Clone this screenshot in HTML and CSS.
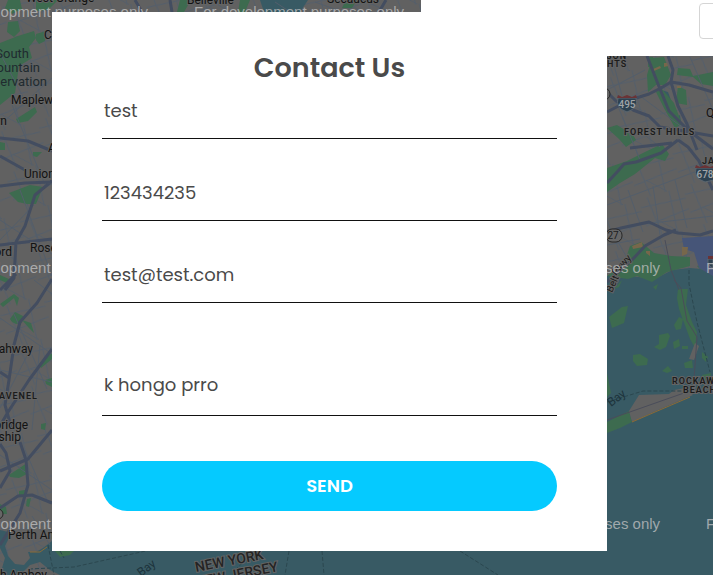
FILE: index.html
```html
<!DOCTYPE html>
<html lang="en">
<head>
<meta charset="utf-8">
<meta name="viewport" content="width=device-width, initial-scale=1">
<title>Contact Us</title>
<link rel="stylesheet" href="styles.css">
</head>
<body>
<main class="page">
  <svg class="map" viewBox="0 0 713 575" preserveAspectRatio="xMidYMid slice" aria-hidden="true">
    <defs>
      <pattern id="streets" width="46" height="42" patternUnits="userSpaceOnUse" patternTransform="rotate(-17)">
        <path class="street" d="M0 8L46 12M0 27L46 23M9 0L13 42M32 0L28 42M13 25L30 42"/>
      </pattern>
    </defs>
    <rect class="land" width="713" height="575"/>
    <rect width="713" height="575" fill="url(#streets)"/>

    <!-- water -->
    <g class="water">
      <path d="M607 276L630 276L655 279L672 270L690 268L713 270V575H607Z"/>
      <path d="M0 530L8 532L9 538L5 546L8 556L15 564L24 565L30 558L28 552L36 552L43 548L52 541V551H713V575H60L50 570L40 562L30 565L20 575H0L5 558L0 548Z"/>
      <path d="M260 0H308L300 12H264Z"/>
      <path d="M15 37L20 36L18 45L13 49L12 45ZM661 90L668 92L672 103L667 110L662 101ZM673 120L680 115L681 123L676 127Z"/>
    </g>

    <!-- parks -->
    <g class="park">
      <path d="M8 0H20L22 9L12 14L5 8ZM8 22L18 21L20 31L14 37L7 32ZM0 43L18 36L34 31L36 38L29 47L32 58L19 66L15 93L0 105ZM36 34L46 31L45 41L39 44L36 40Z"/>
      <path d="M16 119L35 107L37 112L28 121L18 123ZM33 152L42 152L37 157L33 156ZM9 193L30 185L43 187L36 204H27L18 202ZM0 142L5 143L5 150H0ZM0 275L9 279L7 283L0 280Z"/>
      <path d="M0 304L14 294L19 298L17 306L14 298L3 307ZM10 319L15 312L23 316L22 323L16 324L12 322ZM22 320L31 323L34 333L29 328ZM39 364L52 353V359L41 368ZM45 380L52 378V387L46 384ZM41 424L46 423L45 430L41 429Z"/>
      <path d="M9 475L27 463V474L19 478L10 477ZM19 491L25 490L24 496H19ZM27 499L31 498L29 507L26 506ZM0 504L6 507L7 514L0 514Z"/>
      <path d="M36 0H58L48 10L36 11ZM180 0H191L184 12H177ZM240 0H250L245 12H238ZM346 0H357L352 8H342ZM55 551H74L70 555L60 557Z"/>
      <path d="M647 75L652 58L664 57L671 75L665 85L656 85L648 92ZM678 68L690 69L693 76L713 72V86L701 84L693 77L677 75ZM678 86L686 90L687 105L676 103ZM656 92L662 89L674 103L682 124L675 128L664 108ZM607 128L617 125L633 135L636 140L626 147L619 139ZM607 168L627 161L647 151L662 144L669 154L665 161L655 158L635 174L620 183L607 192ZM648 57H653L654 67H648Z"/>
      <path d="M630 246L641 242L654 253L671 256L690 257V266L667 272L652 282L637 276L628 279L607 276L624 264ZM697 266L705 264L709 269L701 270Z"/>
      <path d="M609 317L622 307L628 306L624 323L612 328ZM614 289L622 280L619 287ZM607 373L611 393L607 397ZM633 355L640 354L648 359L647 365L637 366L633 361ZM659 335L668 333L670 336L666 347L660 350L654 347L659 344ZM662 371L668 366L672 371L667 373ZM673 342L679 339L680 346L674 349ZM684 363L692 360L693 368L685 368ZM678 289L688 289L686 305L692 322L697 332L695 348L690 339L679 309L677 298ZM674 325L679 317L683 319L681 329L676 330ZM702 352L708 357L706 362L702 358ZM702 375L711 373L710 381L703 379ZM607 422L629 411L632 422L620 428L607 433ZM653 287L658 284L656 290ZM682 346H688V349H682Z"/>
    </g>

    <!-- airport and sand -->
    <path class="airport" d="M682 238L713 236V276L699 268L694 252L684 249Z"/>
    <path class="land" d="M629 411L639 395L669 394L674 390L685 388L693 395L656 411L632 422ZM689 359L695 343L699 346L694 360Z"/>
    <path class="sand-line" d="M632 422L655 412L690 397M30 552L40 552L47 547"/>
    <path class="sand" d="M632 246L642 242L643 247L633 249ZM646 251L650 251L650 256L646 253ZM682 247L688 247L687 254L682 256ZM664 63L667 63L668 66L664 67ZM677 86H681V88H677ZM653 69L660 66L661 68L654 71Z"/>

    <!-- streets near the bay -->
    <g class="street">
      <path d="M607 232L644 224L713 216M607 205L700 170M628 190L643 232M653 186L660 235M617 240L630 263M675 180L687 228M607 90L645 70M690 57L713 110M607 245L640 239M637 129L660 147M612 57L622 96M615 99L640 160M640 96L713 150"/>
      <path d="M0 318L52 354M14 314L47 389M34 280L52 294M0 370L52 382M0 408L30 350M40 345L32 430M25 450L47 500M0 455L52 490M32 516L50 545M10 100L45 185M0 125L52 78M0 53L30 110M0 220L52 254M20 190L52 276M0 240L34 205"/>
      <path d="M210 0L230 12M275 2L290 12M362 0L390 12M315 2L337 10"/>
    </g>

    <!-- main roads -->
    <g class="road">
      <path d="M0 138L28 141L52 151M0 186L25 183L52 182M52 181L35 195L25 226L16 242L14 278L5 290M0 156L25 170M0 290L16 274M52 279L37 303L20 322L14 345L9 380L5 405L12 430M52 349L29 380L8 412L0 426M0 372L9 378M0 471L28 459L52 430M0 508L18 496L32 495L52 503M0 545L20 513L28 485L26 460L20 442M0 245L52 239M0 444L6 453L10 471L0 488"/>
      <path d="M647 56L658 84L669 111L688 130L713 149M668 56L673 70L671 82L661 88L649 94L630 100L607 112M671 82L678 106L687 124L697 150M671 82L689 85L713 92M607 92L616 101L633 110L649 116L660 127L678 130L713 136M678 140L661 153L636 162L624 164L618 171L607 183M678 140L688 147L699 161L713 190M607 232L621 228L649 222L666 230L678 233L700 235L713 231M632 260L645 246L664 235L676 230M632 260L607 282M630 148L672 143M135 0L142 12M170 0L172 12M386 0L379 12"/>
    </g>
    <path class="rail" d="M665 240L671 270L679 290M674 280L681 288L687 321L697 337L694 379M607 420L684 393"/>
    <path class="dashed" d="M689 270V284L697 322L710 372M607 402L643 391L682 391M48 545L54 575M29 569L74 567L150 550M235 570L255 551M289 551L285 575M322 551L324 575M460 551L498 575M60 551L64 558"/>

    <!-- route shields -->
    <rect class="route" x="606" y="229" width="16" height="13" rx="6"/>
    <circle class="route" cx="604" cy="94" r="6"/>
    <circle class="route" cx="-2" cy="514" r="5"/>
    <g>
      <path class="shield" d="M618 98H636Q639 108 627 112Q615 108 618 98Z"/>
      <path class="shield-top" d="M618 95L622 97L627 95L632 97L636 95L637 98H617Z"/>
      <path class="shield" d="M696 168H714V180L705 182Q693 178 696 168Z"/>
      <path class="shield-top" d="M696 165L700 167L705 165L710 167L713 166V168H695Z"/>
      <path class="shield" d="M708 259H713V268Q707 266 708 259Z"/>
      <path class="shield-top" d="M708 256H713V259H708Z"/>
    </g>
    <g class="shield-text">
      <text x="627" y="108">495</text>
      <text x="705" y="178">678</text>
      <text class="route-text" x="613" y="239">27</text>
    </g>

    <!-- place names -->
    <g class="place">
      <text x="26" y="2">West Orange</text>
      <text x="187" y="4">Belleville</text>
      <text x="327" y="3">Secaucus</text>
      <text x="44" y="39">C</text>
      <text x="11" y="104">Maplewood</text>
      <text x="24" y="178">Union</text>
      <text x="30" y="252">Roselle</text>
      <text x="8" y="539">Perth Amboy</text>
      <text x="48" y="152">A</text>
      <text x="706" y="117">Q</text>
      <g class="place-end">
        <text x="7" y="125">rn</text>
        <text x="12" y="256">ord</text>
        <text x="33" y="353">Rahway</text>
        <text x="28" y="429">bridge</text>
        <text x="21" y="441">ship</text>
        <text x="47" y="579">South Amboy</text>
      </g>
    </g>
    <g class="park-name">
      <text x="29" y="58">South</text>
      <text x="40" y="72">Mountain</text>
      <text x="47" y="86">Reservation</text>
    </g>
    <g class="district">
      <text x="-1" y="399">AVENEL</text>
      <text x="624" y="135">FOREST HILLS</text>
      <text x="606" y="59">SON</text>
      <text x="607" y="67">HTS</text>
      <text x="702" y="164">JAMAICA</text>
      <text x="672" y="384">ROCKAWAY</text>
      <text x="683" y="393">BEACH</text>
    </g>
    <g class="state">
      <text transform="translate(196 572) rotate(-11)">NEW YORK</text>
      <text transform="translate(197 587) rotate(-11)">NEW JERSEY</text>
    </g>
    <g class="bay">
      <text transform="translate(611 407) rotate(-37)">Bay</text>
      <text transform="translate(141 577) rotate(-37)">Bay</text>
      <text class="parkway" transform="translate(612 293) rotate(-66)">Belt</text>
      <text class="parkway" transform="translate(616 276) rotate(-48)">Pkwy</text>
    </g>

    <g class="watermark">
      <text x="-62" y="17">For development purposes only</text>
      <text x="194" y="17">For development purposes only</text>
      <text x="-62" y="273">For development purposes only</text>
      <text x="450" y="273">For development purposes only</text>
      <text x="706" y="273">For development purposes only</text>
      <text x="-62" y="529">For development purposes only</text>
      <text x="450" y="529">For development purposes only</text>
      <text x="706" y="529">For development purposes only</text>
    </g>
  </svg>

  <div class="toolbar"><button class="toolbar-button" type="button" aria-label="Menu"></button></div>

  <form class="card">
    <h1 class="title">Contact Us</h1>
    <input class="field" type="text" aria-label="Name" value="test">
    <input class="field" type="tel" aria-label="Phone" value="123434235">
    <input class="field" type="email" aria-label="Email" value="test@test.com">
    <textarea class="field message" aria-label="Message">k hongo prro</textarea>
    <button class="send" type="button">SEND</button>
  </form>
</main>
</body>
</html>
```
FILE: styles.css
```css
* { box-sizing: border-box; }

body {
  margin: 0;
  font-family: Poppins, Inter, sans-serif;
  color: #4a4a4a;
}

.page {
  position: relative;
  min-height: 100vh;
  padding: 12px 106px 24px 52px;
  overflow: hidden;
  background: #616161;
}

/* Map backdrop */
.map {
  position: absolute;
  inset: 0;
  width: 100%;
  height: 100%;
  font-family: Roboto, sans-serif;
}
.land { fill: #616161; }
.water { fill: #385a64; }
.park { fill: #3d6b4f; }
.airport { fill: #465578; }
.sand { fill: #77674b; }
.sand-line { fill: none; stroke: #8a6a36; stroke-width: 1; }
.street { fill: none; stroke: #535e6b; stroke-width: 1; }
.road { fill: none; stroke: #434d60; stroke-width: 3; stroke-linejoin: round; }
.rail { fill: none; stroke: #4a4d5a; stroke-width: 1; }
.dashed { fill: none; stroke: #2b474f; stroke-width: 1; stroke-dasharray: 4 2; }
.route { fill: #666; stroke: #262626; stroke-width: 1; }
.shield { fill: #2d4150; stroke: #5c6770; stroke-width: 1; }
.shield-top { fill: #6a3336; }
.shield-text { fill: #a0a5a8; font-size: 10px; font-weight: 500; text-anchor: middle; }
.route-text { fill: #1d1d1d; font-weight: 400; }
.place, .district, .park-name, .state, .parkway {
  paint-order: stroke;
  stroke: #646464;
  stroke-width: 2px;
}
.place { fill: #121212; font-size: 12px; }
.place-end { text-anchor: end; }
.park-name { fill: #202b30; font-size: 13px; text-anchor: end; stroke: none; }
.district { fill: #1b1b1b; font-size: 9px; font-weight: 600; letter-spacing: 1px; }
.state { fill: #242424; font-size: 14px; font-weight: 500; }
.bay { fill: #1d343c; font-size: 12px; }
.parkway { fill: #1b1b1b; font-size: 10px; }
.watermark {
  fill: #c4c4c4;
  fill-opacity: 0.75;
  font-family: "Liberation Sans", Arial, sans-serif;
  font-size: 15px;
}

/* Bar over the map's corner */
.toolbar {
  position: absolute;
  top: 0;
  right: 0;
  display: flex;
  justify-content: flex-end;
  width: 41%;
  height: 56px;
  padding-top: 3px;
  overflow: hidden;
  background: #fff;
}
.toolbar-button {
  flex: none;
  width: 56px;
  height: 36px;
  margin-right: -42px;
  border: 1px solid #d5d5d5;
  border-radius: 4px;
  background: #fff;
}

/* Contact form */
.card {
  position: relative;
  display: flex;
  flex-direction: column;
  padding: 35px 50px 40px;
  background: #fff;
}
.title {
  margin: 0;
  font-size: 27px;
  line-height: 42px;
  font-weight: 600;
  text-align: center;
}
.field {
  width: 100%;
  height: 50px;
  margin: 0 0 32px;
  padding: 0 2px 6px;
  border: 0;
  border-bottom: 1px solid #111;
  border-radius: 0;
  outline: 0;
  background: transparent;
  color: #4a4a4a;
  font: 400 18px/27px Poppins, Inter, sans-serif;
}
.message {
  height: 81px;
  margin-bottom: 45px;
  padding-top: 36px;
  resize: none;
  overflow: hidden;
}
.send {
  height: 50px;
  border: 0;
  border-radius: 25px;
  background: #05caff;
  color: #fff;
  font: 600 18px/26px Poppins, Inter, sans-serif;
}
```
